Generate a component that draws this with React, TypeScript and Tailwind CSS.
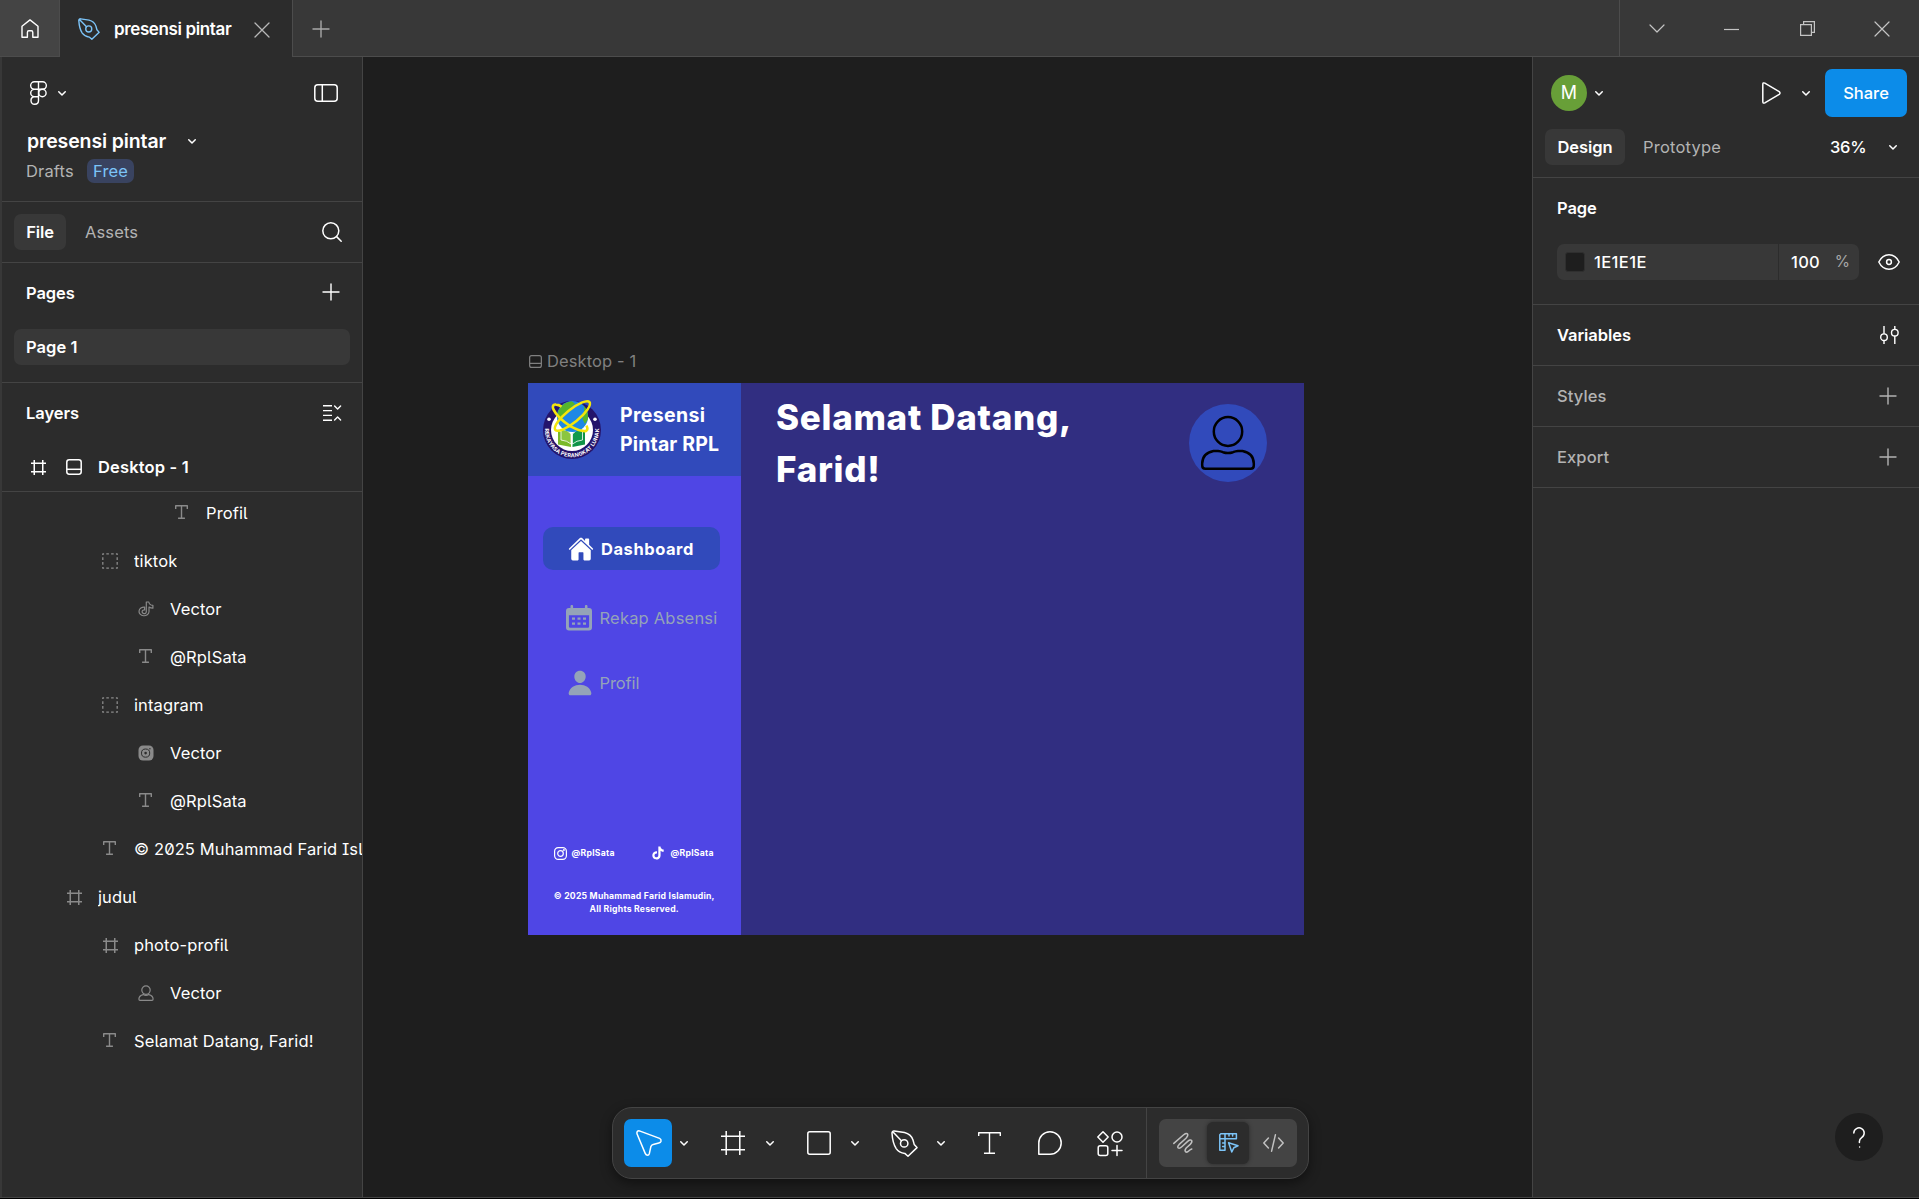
import React from 'react';
import { IoHome, IoPerson, IoLogoTiktok } from 'react-icons/io5';

type GlyphProps = {
  w: number;
  h: number;
  sw?: number;
  className?: string;
  children: React.ReactNode;
};

function Glyph({ w, h, sw = 1.5, className = '', children }: GlyphProps) {
  return (
    <svg
      width={w}
      height={h}
      viewBox={`0 0 ${w} ${h}`}
      fill="none"
      stroke="currentColor"
      strokeWidth={sw}
      strokeLinecap="round"
      strokeLinejoin="round"
      className={`shrink-0 overflow-visible ${className}`}
    >
      {children}
    </svg>
  );
}

function Chevron({ className = '' }: { className?: string }) {
  return (
    <Glyph w={8} h={5} className={className}>
      <path d="M0.75 0.75 4 4 7.25 0.75" />
    </Glyph>
  );
}

function Plus({ size = 16, className = '' }: { size?: number; className?: string }) {
  return (
    <Glyph w={size} h={size} sw={1.4} className={className}>
      <path d={`M${size / 2} 0V${size}M0 ${size / 2}H${size}`} />
    </Glyph>
  );
}

function Pen({ size = 21, sw = 1.5, className = '' }: { size?: number; sw?: number; className?: string }) {
  return (
    <svg
      width={size}
      height={size}
      viewBox="0 0 27 27"
      fill="none"
      stroke="currentColor"
      strokeWidth={sw}
      strokeLinecap="round"
      strokeLinejoin="round"
      className={`shrink-0 ${className}`}
    >
      <path d="M3.2 1 13.5 2.6Q20 4.2 22 10L23.2 14.4 26 17.6 17 26.2 13.8 23.4Q8 22.6 5.2 18.6 1.6 13 1 3.2A2 2 0 0 1 3.2 1ZM1.8 1.8 10.4 10.8" />
      <circle cx="13.2" cy="13.4" r="3.7" />
    </svg>
  );
}

function FrameIcon({ size, className = '' }: { size: number; className?: string }) {
  return (
    <svg
      width={size}
      height={size}
      viewBox="0 0 24 24"
      fill="none"
      stroke="currentColor"
      strokeWidth={(1.5 * 24) / size}
      className={`shrink-0 ${className}`}
    >
      <path d="M5.2 0V24M18.8 0V24M0 5.2H24M0 18.8H24" />
    </svg>
  );
}

function TypeIcon({ w, h, className = '' }: { w: number; h: number; className?: string }) {
  return (
    <Glyph w={w} h={h} sw={1.4} className={className}>
      <path d={`M0.7 3.4V0.7H${w - 0.7}V3.4M${w / 2} 0.7V${h - 0.7}M${w * 0.29} ${h - 0.7}H${w * 0.71}`} strokeLinecap="square" />
    </Glyph>
  );
}

function GroupIcon() {
  return (
    <Glyph w={16} h={16} sw={1.3}>
      <rect x="0.8" y="0.8" width="14.4" height="14.4" strokeDasharray="2.6 2.2" strokeDashoffset="1.3" strokeLinecap="butt" />
    </Glyph>
  );
}

function SectionIcon({ size }: { size: number }) {
  return (
    <svg width={size} height={size} viewBox="0 0 16 16" fill="none" stroke="currentColor" strokeWidth="1.5" className="shrink-0">
      <rect x="0.8" y="0.8" width="14.4" height="14.4" rx="2.4" />
      <path d="M1 10.3H15" />
    </svg>
  );
}

function TiktokVectorIcon() {
  return (
    <Glyph w={16} h={16} sw={1.2}>
      <path d="M8.3 1H10.8Q11.3 4.2 14.9 4.4V7.2Q12.6 7.2 11 6.1V10.8A5 4.3 0 1 1 6.6 6.2V8.9A2.1 1.9 0 1 0 8.3 10.8Z" />
    </Glyph>
  );
}

function InstagramVectorIcon() {
  return (
    <svg width="16" height="16" viewBox="0 0 16 16" className="shrink-0">
      <rect x="0.5" y="0.5" width="15" height="15" rx="4.5" fill="currentColor" />
      <circle cx="7.6" cy="8.1" r="4.1" fill="none" stroke="#2c2c2c" strokeWidth="1" />
      <circle cx="7.6" cy="8.1" r="1.3" fill="#2c2c2c" />
      <circle cx="11.9" cy="3.8" r="0.7" fill="#2c2c2c" />
    </svg>
  );
}

function PersonVectorIcon() {
  return (
    <Glyph w={16} h={16} sw={1.2}>
      <circle cx="8" cy="5.1" r="4.2" />
      <path d="M5.2 9.6Q1 10.6 0.9 14Q0.9 15.3 2 15.3H14Q15.1 15.3 15.1 14Q15 10.6 10.8 9.6Q8 11.2 5.2 9.6Z" />
    </Glyph>
  );
}

type LayerKind = 'text' | 'group' | 'frame' | 'tiktok' | 'instagram' | 'person';

const layers: { name: string; kind: LayerKind; indent: string }[] = [
  { name: 'Profil', kind: 'text', indent: 'pl-[168px]' },
  { name: 'tiktok', kind: 'group', indent: 'pl-[96px]' },
  { name: 'Vector', kind: 'tiktok', indent: 'pl-[132px]' },
  { name: '@RplSata', kind: 'text', indent: 'pl-[132px]' },
  { name: 'intagram', kind: 'group', indent: 'pl-[96px]' },
  { name: 'Vector', kind: 'instagram', indent: 'pl-[132px]' },
  { name: '@RplSata', kind: 'text', indent: 'pl-[132px]' },
  { name: '© 2025 Muhammad Farid Isla', kind: 'text', indent: 'pl-[96px]' },
  { name: 'judul', kind: 'frame', indent: 'pl-[60px]' },
  { name: 'photo-profil', kind: 'frame', indent: 'pl-[96px]' },
  { name: 'Vector', kind: 'person', indent: 'pl-[132px]' },
  { name: 'Selamat Datang, Farid!', kind: 'text', indent: 'pl-[96px]' },
];

function LayerIcon({ kind }: { kind: LayerKind }) {
  if (kind === 'text') return <TypeIcon w={13} h={14} className="mr-px mb-[2px]" />;
  if (kind === 'group') return <GroupIcon />;
  if (kind === 'frame') return <FrameIcon size={15} />;
  if (kind === 'tiktok') return <TiktokVectorIcon />;
  if (kind === 'instagram') return <InstagramVectorIcon />;
  return <PersonVectorIcon />;
}

function TitleBar() {
  return (
    <header className="flex h-[57px] shrink-0 border-b border-[#4c4c4c] bg-[#383838]">
      <div className="flex w-[60px] items-center justify-center border-r border-[#4c4c4c] bg-[#444444]">
        <Glyph w={18} h={19} sw={1.4}>
          <path d="M1 7.2 9 0.9 17 7.2V18.2H11.8V13.4Q11.8 11.8 10.4 11.8H7.8Q6.4 11.8 6.4 13.4V18.2H1Z" />
        </Glyph>
      </div>
      <div className="-mb-px flex w-[233px] items-center border-r border-[#4c4c4c] bg-[#2c2c2c] pl-[18px]">
        <Pen size={22} sw={1.7} className="text-[#7cc4f8]" />
        <span className="ml-[14px] w-[118px] whitespace-nowrap text-[17px] font-semibold tracking-[-0.38px]">presensi pintar</span>
        <Glyph w={14} h={14} sw={1.3} className="ml-[23px] mt-[2px] text-[#b8b8b8]">
          <path d="M0 0 14 14M14 0 0 14" />
        </Glyph>
      </div>
      <div className="ml-[20px] mt-[1px] flex items-center text-[#a8a8a8]">
        <Plus />
      </div>
      <div className="ml-auto flex h-[57px] w-[300px] border-l border-[#4c4c4c] text-[#c4c4c4]">
        <div className="flex flex-1 items-center justify-center">
          <Glyph w={14} h={7} sw={1.2}><path d="M0 0 7 7 14 0" /></Glyph>
        </div>
        <div className="flex flex-1 items-center justify-center pl-[2px] pt-[2px]">
          <Glyph w={15} h={1} sw={1.2}><path d="M0 0.5H15" strokeLinecap="butt" /></Glyph>
        </div>
        <div className="flex flex-1 items-center justify-center pl-[2px]">
          <Glyph w={15} h={15} sw={1.2}>
            <path d="M0.6 3.6H11.4V14.4H0.6ZM3.6 3.4V0.6H14.4V11.4H11.6" strokeLinejoin="miter" />
          </Glyph>
        </div>
        <div className="flex flex-1 items-center justify-center pl-[2px]">
          <Glyph w={14} h={14} sw={1.2}><path d="M0 0 14 14M14 0 0 14" /></Glyph>
        </div>
      </div>
    </header>
  );
}

function LeftPanel() {
  return (
    <aside className="flex w-[363px] shrink-0 flex-col border-l-2 border-r border-l-[#383838] border-r-[#444444] bg-[#2c2c2c]">
      <div className="h-[145px] border-b border-[#444444]">
        <div className="flex h-[72px] items-center pl-[28px] pr-[24px]">
          <Glyph w={17} h={24} sw={1.4}>
            <path d="M8.5 0.8H4.4A3.7 3.7 0 0 0 4.4 8.3H8.5ZM8.5 0.8H12.6A3.7 3.7 0 0 1 12.6 8.3H8.5ZM8.5 8.3H4.4A3.7 3.7 0 0 0 4.4 15.7H8.5ZM8.5 15.7H4.4A3.75 3.75 0 1 0 8.5 19.4Z" />
            <circle cx="12.4" cy="12" r="3.7" />
          </Glyph>
          <Chevron className="ml-[11px]" />
          <Glyph w={24} h={18} sw={1.5} className="ml-auto">
            <rect x="0.8" y="0.8" width="22.4" height="16.4" rx="3" />
            <path d="M8.3 1V17" />
          </Glyph>
        </div>
        <div className="flex h-6 items-center pl-[25px]">
          <span className="w-[140px] whitespace-nowrap text-[19.5px] font-semibold tracking-[-0.13px]">presensi pintar</span>
          <Chevron className="ml-[21px]" />
        </div>
        <div className="flex h-9 items-center pl-[24px] text-[16.5px] text-[#b3b3b3]">
          <span className="w-[61px] tracking-[0.15px]">Drafts</span>
          <span className="flex h-6 w-[47px] items-center justify-center rounded-[7px] bg-[#394360] tracking-[0.1px] text-[#7cc4f8]">Free</span>
        </div>
      </div>

      <div className="flex h-[61px] items-center border-b border-[#444444] pl-[12px] pr-[20px]">
        <div className="flex h-9 w-[52px] items-center justify-center rounded-[7px] bg-[#383838] font-semibold tracking-[-0.1px]">File</div>
        <div className="ml-[19px] tracking-[0.12px] text-[#b3b3b3]">Assets</div>
        <Glyph w={20} h={20} sw={1.5} className="ml-auto">
          <circle cx="8.8" cy="8.8" r="8" />
          <path d="M14.6 14.6 19.2 19.2" />
        </Glyph>
      </div>

      <div className="h-[120px] border-b border-[#444444]">
        <div className="flex h-[60px] items-center justify-between pl-[24px] pr-[23px]">
          <span className="font-semibold tracking-[-0.1px]">Pages</span>
          <Plus className="mb-[2px]" />
        </div>
        <div className="ml-[12px] mt-[6px] flex h-9 w-[336px] items-center rounded-[7px] bg-[#383838] pl-[12px] font-semibold tracking-[0.05px]">
          Page 1
        </div>
      </div>

      <div className="h-[109px] border-b border-[#444444]">
        <div className="flex h-[60px] items-center justify-between pl-[24px] pr-[21px]">
          <span className="font-semibold tracking-[-0.05px]">Layers</span>
          <Glyph w={18} h={16} sw={1.4}>
            <path d="M0 0.8H9M0 5.6H9M0 10.4H9M0 15.2H9" strokeLinecap="butt" />
            <path d="M11.6 1 14.6 4 17.6 1M11.6 15 14.6 12 17.6 15" />
          </Glyph>
        </div>
        <div className="flex h-12 items-center pl-[28px]">
          <FrameIcon size={15} className="ml-[0.5px]" />
          <span className="ml-[20.5px] flex"><SectionIcon size={16} /></span>
          <span className="ml-[16px] whitespace-nowrap font-semibold tracking-[0.15px]">Desktop - 1</span>
        </div>
      </div>

      <div className="flex-1 overflow-hidden [font-feature-settings:'ss02']">
        <div className="-mt-[3px]">
          {layers.map((l, i) => (
            <div key={i} className={`flex h-12 items-center ${l.indent}`}>
              <span className="flex w-6 shrink-0 items-center justify-center text-[#8a8a8a]"><LayerIcon kind={l.kind} /></span>
              <span className="ml-[12px] min-w-0 overflow-hidden whitespace-nowrap tracking-[0.12px] text-white">{l.name}</span>
            </div>
          ))}
        </div>
      </div>
    </aside>
  );
}

function SchoolLogo() {
  return (
    <svg width="60" height="60" viewBox="0 0 60 60" className="overflow-visible">
      <circle cx="29" cy="30" r="29" fill="#24146b" />
      <circle cx="29" cy="30" r="21" fill="#ffffff" />
      <defs>
        <path id="rim" d="M2.4 25.5A27 27 0 1 0 55.6 25.5" />
      </defs>
      <text fill="#ffffff" fontSize="5.4" fontWeight="700" fontFamily="Inter, sans-serif">
        <textPath href="#rim" textLength="88" startOffset="3">REKAYASA PERANGKAT LUNAK</textPath>
      </text>
      <circle cx="6" cy="19.2" r="1.8" fill="#fff" />
      <circle cx="52" cy="19.2" r="1.8" fill="#fff" />
      <path d="M15 31 28 35V47L15 44.5Z" fill="#7ab929" />
      <path d="M42 31 29.5 35V47L42 44.5Z" fill="#0f9347" />
      <path d="M18 29Q25 29.5 28 34V44Q24 40.5 18 40Z" fill="#8cc63f" stroke="#fff" strokeWidth="0.8" />
      <path d="M39.5 29Q32.5 29.5 29.5 34V44Q33.5 40.5 39.5 40Z" fill="#129a4c" stroke="#fff" strokeWidth="0.8" />
      <circle cx="29.5" cy="16.5" r="15.6" fill="#1e88e5" />
      <path d="M17 8Q21 2 29 1.2L32 4 28 7 27 11 23 13 20 18 15.5 20Q12.6 14 17 8Z" fill="#55b52c" />
      <path d="M41 6Q45.6 11 45 19L42 24 39.5 19 41 13Z" fill="#55b52c" />
      <ellipse cx="29.4" cy="16" rx="22" ry="6.4" fill="none" stroke="#f4e60c" strokeWidth="2.5" transform="rotate(-39 29.4 16)" />
      <path d="M13 4.6Q8.4 4 10.4 9.4 14.6 18 27.6 26.4 38.4 32 43 31 45.6 29.2 43.4 25.6M13 4.6Q15.6 4.6 18.6 6.6" fill="none" stroke="#f4e60c" strokeWidth="2.6" />
    </svg>
  );
}

function CalendarIcon() {
  return (
    <svg width="26" height="26" viewBox="0 0 26 26" className="shrink-0" fill="#94a3b8">
      <path fillRule="evenodd" d="M4.5 1.2A1.3 1.3 0 0 1 7.1 1.2V3H18.9V1.2A1.3 1.3 0 0 1 21.5 1.2V3H23Q26 3 26 6V22.6Q26 25.6 23 25.6H3Q0 25.6 0 22.6V6Q0 3 3 3H4.5ZM2.9 10.2V21.6Q2.9 22.8 4.1 22.8H21.9Q23.1 22.8 23.1 21.6V10.2Z" />
      <path d="M6 12.4H9V14.8H6ZM11.5 12.4H14.5V14.8H11.5ZM17 12.4H20V14.8H17ZM6 17.4H9V19.8H6ZM11.5 17.4H14.5V19.8H11.5ZM17 17.4H20V19.8H17Z" />
    </svg>
  );
}

function InstagramIcon() {
  return (
    <Glyph w={13} h={13} sw={1.2}>
      <rect x="0.6" y="0.6" width="11.8" height="11.8" rx="3.6" />
      <circle cx="6.5" cy="6.5" r="2.8" />
      <circle cx="9.9" cy="3.1" r="0.4" />
    </Glyph>
  );
}

function DesktopFrame() {
  return (
    <div className="absolute left-[164.5px] top-[325.5px] flex h-[552.5px] w-[776.5px] bg-[#312e81]">
      <div className="flex w-[213.5px] flex-col bg-[#4f46e5]">
        <div className="flex h-[93.5px] items-center bg-[#314abb] pl-[15.5px]">
          <div className="mt-px h-[60px] w-[60px]"><SchoolLogo /></div>
          <div className="ml-[17px] mt-[2px] whitespace-nowrap text-[19.5px] font-bold leading-[29px]">
            <div className="tracking-[0.35px]">Presensi</div>
            <div className="tracking-[0.15px]">Pintar RPL</div>
          </div>
        </div>
        <div className="ml-[15.5px] mt-[51px] flex h-[43px] w-[177px] items-center rounded-[10px] bg-[#314abb] pl-[25px]">
          <IoHome className="h-[26px] w-[26px] shrink-0" />
          <span className="ml-[7px] whitespace-nowrap text-[16.5px] font-bold tracking-[0.55px]">Dashboard</span>
        </div>
        <div className="ml-[38.5px] mt-[34px] flex h-[28px] items-center text-[#94a3b8]">
          <CalendarIcon />
          <span className="ml-[7.5px] whitespace-nowrap text-[16.5px] tracking-[0.2px]">Rekap Absensi</span>
        </div>
        <div className="ml-[38.5px] mt-[37px] flex h-[28px] items-center text-[#94a3b8]">
          <IoPerson className="h-[28px] w-[28px] shrink-0" />
          <span className="ml-[5.5px] whitespace-nowrap text-[16.5px] tracking-[-0.1px]">Profil</span>
        </div>
        <div className="mt-[148px] flex h-[16px] items-center pl-[26px] text-[8.67px] font-bold tracking-[0.25px]">
          <InstagramIcon />
          <span className="ml-[5px] w-[44px] whitespace-nowrap">@RplSata</span>
          <IoLogoTiktok className="ml-[35px] h-[14px] w-[14px] shrink-0" />
          <span className="ml-[6px] whitespace-nowrap">@RplSata</span>
        </div>
        <div className="mt-[29px] whitespace-nowrap text-center text-[8.67px] font-bold leading-[13px] tracking-[0.22px]">
          <div>© 2025 Muhammad Farid Islamudin,</div>
          <div>All Rights Reserved.</div>
        </div>
      </div>
      <div className="flex flex-1 justify-between pl-[35px] pr-[37px]">
        <h1 className="mt-[8px] whitespace-nowrap text-[35px] font-extrabold leading-[52px] tracking-[0.7px]">
          Selamat Datang,
          <br />
          Farid!
        </h1>
        <div className="mt-[21.5px] flex h-[78px] w-[78px] items-center justify-center rounded-full bg-[#314abb]">
          <Glyph w={54} h={54} sw={2.5} className="text-black">
            <ellipse cx="27" cy="15.5" rx="14.2" ry="14.4" />
            <path d="M12.5 35H17Q19.5 35.2 22 36.2 27 37.8 32 36.2 34.5 35.2 37 35H41.5Q52.5 37 52.8 47.5V49.5Q52.8 52.8 49.6 52.8H4.4Q1.2 52.8 1.2 49.5V47.5Q1.5 37 12.5 35Z" />
          </Glyph>
        </div>
      </div>
    </div>
  );
}

function Toolbar() {
  return (
    <div className="absolute left-[249px] top-[1050px] flex h-[72px] w-[697px] items-center rounded-[20px] border border-[#444444] bg-[#2c2c2c] pl-[11px] shadow-[0_4px_12px_rgba(0,0,0,0.45)]">
      <div className="flex h-12 w-12 items-center justify-center rounded-[7px] bg-[#0c8ce9] pl-px">
        <Glyph w={26} h={26} sw={1.5}>
          <path d="M3.4 0.9 23.6 8.4Q25.4 9.4 25 11.2 24.6 12.6 22.8 13L17.2 14.4Q15.4 15 14.8 16.8L13.4 23.4Q12.8 25.2 11.6 25.2 10 25.2 9.2 23.4L1 3.8Q0.4 0.6 3.4 0.9Z" />
        </Glyph>
      </div>
      <Chevron className="ml-[8px]" />
      <FrameIcon size={24} className="ml-[33px]" />
      <Chevron className="ml-[21px]" />
      <Glyph w={24} h={24} sw={1.5} className="ml-[33px]">
        <rect x="0.8" y="0.8" width="22.4" height="22.4" rx="2" />
      </Glyph>
      <Chevron className="ml-[20px]" />
      <Pen size={27} sw={1.5} className="ml-[32px]" />
      <Chevron className="ml-[19px]" />
      <TypeIcon w={23} h={22} className="ml-[33px]" />
      <Glyph w={24} h={24} sw={1.5} className="ml-[37px]">
        <path d="M0.8 23.2V12A11.2 11.2 0 1 1 12 23.2Z" />
      </Glyph>
      <Glyph w={26} h={25} sw={1.5} className="ml-[35px]">
        <path d="M6 0.8 11.2 6 6 11.2 0.8 6ZM20 14.5V24.5M15 19.5H25" />
        <circle cx="20" cy="6" r="5" />
        <rect x="1.2" y="14.8" width="9.6" height="9.6" rx="2" />
      </Glyph>
      <div className="ml-[23px] h-[70px] w-px bg-[#444444]" />
      <div className="ml-[12px] flex h-12 w-[138px] items-center rounded-[7px] bg-[#444444] px-[3px] text-[#c0c0c0]">
        <div className="flex w-[45px] justify-center pr-[4px]">
          <Glyph w={20} h={20} sw={1.5}>
            <path d="M0.8 10.4 10.4 2Q13.6 -0.4 14.6 1.2 15.4 2.8 13 5.2L6.2 11.4Q4 13.8 5.2 14.8 6.6 15.8 8.8 13.8L14.4 8.6Q17.4 6 18.6 7.4 19.6 9 17.2 11.4L13.2 15Q11.2 17.4 12.6 18.8 14 19.8 16 17.8 17.4 16.4 18.8 16" />
          </Glyph>
        </div>
        <div className="flex h-[42px] w-[42px] items-center justify-center rounded-[6px] bg-[#2c2c2c] pl-px text-[#7cc4f8] shadow-[0_0_4px_rgba(0,0,0,0.4)]">
          <Glyph w={20} h={20} sw={1.5}>
            <path d="M1.8 0.8H17.4V5.8H6V17.2H0.8V1.8ZM6 5.8V0.8M0.8 5.8H6M10 1V3M13.6 1V3M3.6 10H5.6M3.6 13.6H5.6" />
            <path d="M9.6 9.8 19 12.8 14.8 14.8 12.8 19Z" />
          </Glyph>
        </div>
        <div className="flex flex-1 justify-center pl-[3px]">
          <Glyph w={21} h={18} sw={1.5}>
            <path d="M5.4 4 0.8 9 5.4 14M15.6 4 20.2 9 15.6 14M12.4 0.8 8.6 17.2" />
          </Glyph>
        </div>
      </div>
    </div>
  );
}

function Canvas() {
  return (
    <main className="relative flex-1 overflow-hidden bg-[#1e1e1e]">
      <div className="absolute left-[166px] top-[294px] flex h-5 items-center gap-[5px] text-[#808080]">
        <SectionIcon size={13} />
        <span className="text-[16.5px] tracking-[0.1px]">Desktop - 1</span>
      </div>
      <DesktopFrame />
      <Toolbar />
    </main>
  );
}

function RightPanel() {
  return (
    <aside className="relative flex w-[387px] shrink-0 flex-col border-l border-[#444444] bg-[#2c2c2c]">
      <div className="h-[121px] border-b border-[#444444]">
        <div className="flex h-[72px] items-center pl-[18px] pr-[12px]">
          <div className="flex h-9 w-9 items-center justify-center rounded-full bg-[#689f38] text-[18px]">M</div>
          <Chevron className="ml-[8px]" />
          <Glyph w={19} h={22} sw={1.5} className="ml-auto">
            <path d="M0.8 2.4Q0.8 0.2 2.8 1.2L17.2 9.6Q18.8 11 17.2 12.4L2.8 20.8Q0.8 21.8 0.8 19.6Z" />
          </Glyph>
          <Chevron className="ml-[21px] mt-[1px]" />
          <div className="ml-[15px] flex h-12 w-[82px] items-center justify-center rounded-[7px] bg-[#0c8ce9] font-medium">Share</div>
        </div>
        <div className="flex h-9 items-center pl-[12px] pr-[22px]">
          <div className="flex h-9 w-[80px] items-center justify-center rounded-[7px] bg-[#383838] font-semibold tracking-[-0.05px]">Design</div>
          <div className="ml-[18px] tracking-[0.2px] text-[#b3b3b3]">Prototype</div>
          <div className="ml-auto w-[37px] font-medium tracking-[-0.3px]">36%</div>
          <Chevron className="ml-[22px]" />
        </div>
      </div>
      <div className="h-[127px] border-b border-[#444444]">
        <div className="flex h-[60px] items-center pl-[24px] font-semibold tracking-[-0.1px]">Page</div>
        <div className="mt-[6px] flex items-center pl-[24px] pr-[19px]">
          <div className="flex h-9 w-[302px] items-center rounded-[7px] bg-[#383838]">
            <div className="ml-[8px] h-5 w-5 rounded-[3px] border border-[#2f2f2f] bg-[#1e1e1e]" />
            <span className="ml-[9px] font-medium tracking-[0.4px]">1E1E1E</span>
            <div className="ml-auto h-9 w-px bg-[#2c2c2c]" />
            <div className="flex w-[80px] items-center justify-between pl-[12px] pr-[9px]">
              <span className="font-medium tracking-[0.3px]">100</span>
              <span className="text-[15.5px] text-[#a8a8a8]">%</span>
            </div>
          </div>
          <Glyph w={22} h={16} sw={1.5} className="ml-auto">
            <path d="M0.8 8Q4.4 0.8 11 0.8T21.2 8Q17.6 15.2 11 15.2T0.8 8Z" />
            <circle cx="11" cy="8" r="2.4" />
          </Glyph>
        </div>
      </div>
      <div className="flex h-[61px] items-center justify-between border-b border-[#444444] pl-[24px] pr-[20px]">
        <span className="font-semibold tracking-[-0.05px]">Variables</span>
        <Glyph w={19} h={18} sw={1.4}>
          <path d="M4 0V7.8M4 14.6V18M14.8 0V3.4M14.8 10V18" strokeLinecap="butt" />
          <circle cx="4" cy="11.2" r="3.3" />
          <circle cx="14.8" cy="6.7" r="3.3" />
        </Glyph>
      </div>
      {['Styles', 'Export'].map((name) => (
        <div key={name} className="flex h-[61px] items-center justify-between border-b border-[#444444] pl-[24px] pr-[23px] text-[#b3b3b3]">
          <span className="font-medium tracking-[0.1px]">{name}</span>
          <Plus className="mb-px" />
        </div>
      ))}
      <div className="absolute bottom-[36px] right-[36px] flex h-12 w-12 items-center justify-center rounded-full bg-[#1e1e1e]">
        <Glyph w={12} h={21} sw={1.5}>
          <path d="M0.8 6A5.2 5.2 0 1 1 8.6 10.6Q6.4 12 6.4 14.4V15.6M6.6 20V20.1" />
        </Glyph>
      </div>
    </aside>
  );
}

export default function App() {
  return (
    <div className="flex h-[1199px] w-[1919px] flex-col overflow-hidden bg-black font-['Inter',sans-serif] text-[16.5px] leading-6 text-white">
      <TitleBar />
      <div className="flex h-[1141px] border-b border-[#444444]">
        <LeftPanel />
        <Canvas />
        <RightPanel />
      </div>
    </div>
  );
}
